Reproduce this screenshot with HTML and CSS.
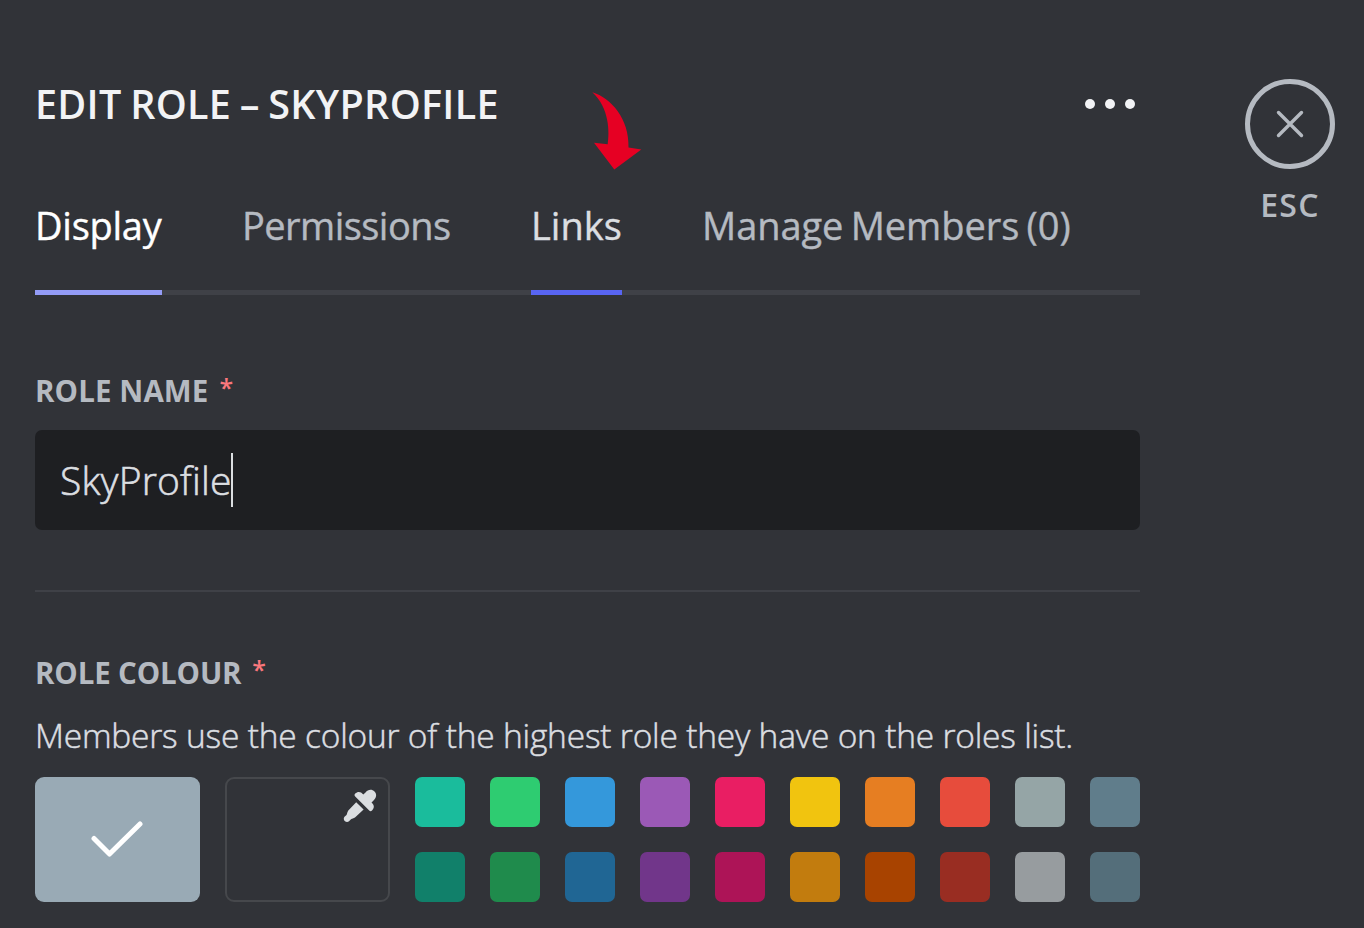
FILE: index.html
```
<!DOCTYPE html>
<html lang="en">
<head>
<meta charset="utf-8">
<title>Edit role</title>
<link rel="stylesheet" href="styles.css">
</head>
<body>
<div class="page">
  <main class="panel">
    <header class="header">
      <h1 class="title">EDIT ROLE – SKYPROFILE</h1>
      <svg class="more" viewBox="0 0 50 10"><circle cx="5" cy="5" r="5"/><circle cx="25" cy="5" r="5"/><circle cx="45" cy="5" r="5"/></svg>
      <svg class="arrow" viewBox="0 0 52 80"><path d="M2.3 2.3C21 8 39.500 29 38.500 57.5L51.3 59.5 24.3 79.5 4 52.8 17.7 54.3C19.500 42 19.500 18 2.300 2.300Z"/></svg>
    </header>
    <nav class="tabs">
      <a class="tab tab-display">Display</a>
      <a class="tab tab-permissions">Permissions</a>
      <a class="tab tab-links">Links</a>
      <a class="tab tab-members">Manage Members (0)</a>
    </nav>
    <label class="label label-name">ROLE NAME<span class="star">*</span></label>
    <div class="input"><span class="value">SkyProfile</span><span class="caret"></span></div>
    <div class="divider"></div>
    <div class="label label-colour">ROLE COLOUR<span class="star">*</span></div>
    <p class="hint">Members use the colour of the highest role they have on the roles list.</p>
    <div class="picker">
      <div class="current"><svg class="check" viewBox="0 0 52 38"><path d="M3 17.500 18.500 33 49 3"/></svg></div>
      <div class="custom"><svg class="dropper" viewBox="0 0 34 34"><path d="M22.500 3.500C25 .2 29 0 31.500 2.500 34 5 33.500 8.500 31 11L28.500 13.500C31.500 16 31.500 19 29 21.500 28 22.500 27 22.300 26.200 21.500L12.200 7.500C11.300 6.600 11.300 5.500 12.200 4.600 14.500 2.500 17.500 2 20.300 5.600Z"/><path d="M13.200 13.200 20.600 20.600 12 28.500C10.500 29.500 9.300 29.500 8 30.300L6 32.300C4.800 33.300 3 33.200 1.700 32 .5 30.700 .5 29 1.500 27.800L3.500 26C4.300 24.500 4.200 23 5.300 21.500Z"/></svg></div>
      <div class="swatches">
        <i class="sw c1"></i><i class="sw c2"></i><i class="sw c3"></i><i class="sw c4"></i><i class="sw c5"></i><i class="sw c6"></i><i class="sw c7"></i><i class="sw c8"></i><i class="sw c9"></i><i class="sw c10"></i>
        <i class="sw d1"></i><i class="sw d2"></i><i class="sw d3"></i><i class="sw d4"></i><i class="sw d5"></i><i class="sw d6"></i><i class="sw d7"></i><i class="sw d8"></i><i class="sw d9"></i><i class="sw d10"></i>
      </div>
    </div>
  </main>
  <aside class="close">
    <div class="ring"><svg class="cross" viewBox="0 0 28 28"><path d="M2.500 2.500l23 23M25.500 2.500l-23 23"/></svg></div>
    <span class="esc">ESC</span>
  </aside>
</div>
</body>
</html>
```
FILE: styles.css
```
* { box-sizing: border-box; }
body { margin: 0; background: #313338; font-family: "Open Sans", "Noto Sans", sans-serif; }
.page { display: flex; width: 1364px; height: 928px; padding: 79px 29px 0 35px; justify-content: space-between; overflow: hidden; }
.panel { width: 1105px; display: flex; flex-direction: column; }
.header { position: relative; display: flex; justify-content: space-between; align-items: center; height: 40px; margin-top: 4px; }
.title { margin: 2px 0 0; font-size: 39.5px; font-weight: 600; line-height: 40px; letter-spacing: 0.3px; word-spacing: -2px; color: #f2f3f5; white-space: nowrap; }
.more { width: 50px; height: 10px; margin: 2px 5px 0 0; fill: #f2f3f5; }
.arrow { position: absolute; left: 555px; top: 7px; width: 52px; height: 80px; fill: #e60023; }
.tabs { display: flex; gap: 80px; height: 91px; margin-top: 81px; box-shadow: inset 0 -5px #3f4147; }
.tab { padding-top: 1px; font-size: 38px; line-height: 40px; color: #b5bac1; white-space: nowrap; flex: none; -webkit-text-stroke: 0.4px currentColor; }
.tab-display { width: 127px; letter-spacing: -0.25px; color: #fff; border-bottom: 5px solid #949cf7; }
.tab-permissions { width: 209px; letter-spacing: -0.55px; }
.tab-links { width: 91px; color: #dbdee1; border-bottom: 5px solid #5865f2; }
.tab-members { letter-spacing: -0.05px; word-spacing: -2.500px; }
.label { display: block; font-size: 29.5px; font-weight: 700; line-height: 30px; height: 30px; color: #b5bac1; white-space: nowrap; }
.label-name { padding-top: 1px; margin-top: 80px; letter-spacing: 0.1px; }
.label-colour { padding-top: 1px; margin-top: 65px; letter-spacing: -0.15px; }
.star { color: #fa777c; margin-left: 11px; font-size: 25px; line-height: 20px; font-weight: 600; vertical-align: 5px; }
.input { display: flex; align-items: center; height: 100px; margin-top: 25px; padding-left: 25px; border-radius: 7px; background: #1e1f22; color: #dbdee1; }
.value { width: 171px; font-size: 39px; font-weight: 300; line-height: 40px; letter-spacing: 0.2px; margin-top: -1px; white-space: nowrap; -webkit-text-stroke: 0.6px currentColor; }
.caret { width: 2px; height: 54px; background: #dbdee1; }
.divider { height: 2px; margin-top: 60px; background: #3f4147; }
.hint { margin: 28px 0 0; font-size: 33.5px; font-weight: 300; line-height: 40px; letter-spacing: -0.2px; color: #dbdee1; white-space: nowrap; -webkit-text-stroke: 0.5px currentColor; }
.picker { display: flex; gap: 25px; margin-top: 22px; }
.current { display: grid; place-items: center; width: 165px; height: 125px; border-radius: 9px; background: #99aab5; }
.check { width: 52px; height: 38px; margin: 1px 2px 0 0; fill: none; stroke: #fff; stroke-width: 5; stroke-linecap: round; stroke-linejoin: round; }
.custom { display: flex; justify-content: flex-end; width: 165px; height: 125px; padding: 10px 11px; border: 2px solid #46484c; border-radius: 9px; }
.dropper { width: 34px; height: 34px; fill: #dbdee1; }
.swatches { display: grid; grid-template-columns: repeat(10, 50px); grid-auto-rows: 50px; gap: 25px; }
.sw { border-radius: 7px; }
.c1 { background: #1abc9c; } .c2 { background: #2ecc71; } .c3 { background: #3498db; } .c4 { background: #9b59b6; } .c5 { background: #e91e63; }
.c6 { background: #f1c40f; } .c7 { background: #e67e22; } .c8 { background: #e74c3c; } .c9 { background: #95a5a6; } .c10 { background: #607d8b; }
.d1 { background: #11806a; } .d2 { background: #1f8b4c; } .d3 { background: #206694; } .d4 { background: #71368a; } .d5 { background: #ad1457; }
.d6 { background: #c27c0e; } .d7 { background: #a84300; } .d8 { background: #992d22; } .d9 { background: #979c9f; } .d10 { background: #546e7a; }
.close { display: flex; flex-direction: column; align-items: center; width: 90px; color: #b5bac1; }
.ring { display: grid; place-items: center; width: 90px; height: 90px; border: 5px solid #b5bac1; border-radius: 50%; }
.cross { width: 28px; height: 28px; margin: 0 1px 0 0; fill: none; stroke: #b5bac1; stroke-width: 3.4; stroke-linecap: round; }
.esc { margin-top: 16px; font-size: 32px; font-weight: 600; line-height: 40px; letter-spacing: 1.3px; }
```
